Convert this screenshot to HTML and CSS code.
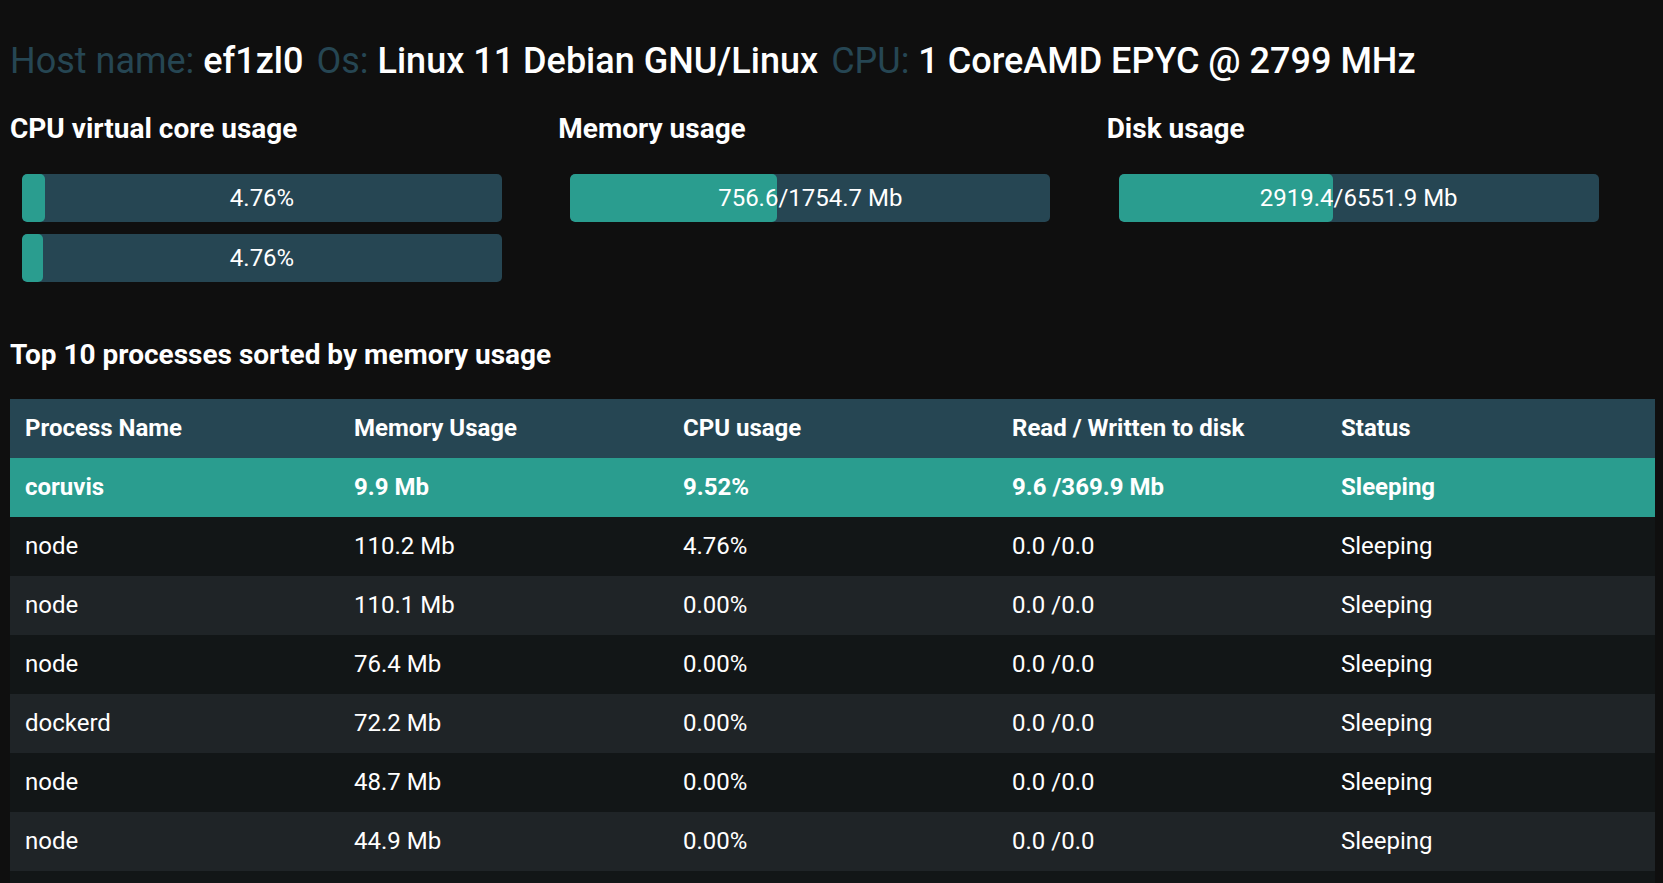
FILE: index.html
```html
<!DOCTYPE html>
<html lang="en">
<head>
<meta charset="utf-8">
<title>System monitor</title>
<link rel="stylesheet" href="styles.css">
</head>
<body>
<main class="page">
  <header class="sysinfo">
    <span class="item"><span class="label">Host name:</span> <span class="value">ef1zl0</span></span>
    <span class="item"><span class="label">Os:</span> <span class="value">Linux 11 Debian GNU/Linux</span></span>
    <span class="item"><span class="label">CPU:</span> <span class="value">1 CoreAMD EPYC @ 2799 MHz</span></span>
  </header>

  <section class="usage">
    <div class="usage-col">
      <h3 class="usage-title">CPU virtual core usage</h3>
      <div class="bars">
        <div class="bar"><div class="fill" style="width:4.76%"></div><span class="bar-text">4.76%</span></div>
        <div class="bar"><div class="fill" style="width:4.4%"></div><span class="bar-text">4.76%</span></div>
      </div>
    </div>
    <div class="usage-col">
      <h3 class="usage-title">Memory usage</h3>
      <div class="bars">
        <div class="bar"><div class="fill" style="width:43.1%"></div><span class="bar-text">756.6/1754.7 Mb</span></div>
      </div>
    </div>
    <div class="usage-col">
      <h3 class="usage-title">Disk usage</h3>
      <div class="bars">
        <div class="bar"><div class="fill" style="width:44.56%"></div><span class="bar-text">2919.4/6551.9 Mb</span></div>
      </div>
    </div>
  </section>

  <h2 class="procs-title">Top 10 processes sorted by memory usage</h2>
  <table class="procs">
    <thead>
      <tr><th>Process Name</th><th>Memory Usage</th><th>CPU usage</th><th>Read / Written to disk</th><th>Status</th></tr>
    </thead>
    <tbody>
      <tr class="self"><td>coruvis</td><td>9.9 Mb</td><td>9.52%</td><td>9.6 /369.9 Mb</td><td>Sleeping</td></tr>
      <tr><td>node</td><td>110.2 Mb</td><td>4.76%</td><td>0.0 /0.0</td><td>Sleeping</td></tr>
      <tr><td>node</td><td>110.1 Mb</td><td>0.00%</td><td>0.0 /0.0</td><td>Sleeping</td></tr>
      <tr><td>node</td><td>76.4 Mb</td><td>0.00%</td><td>0.0 /0.0</td><td>Sleeping</td></tr>
      <tr><td>dockerd</td><td>72.2 Mb</td><td>0.00%</td><td>0.0 /0.0</td><td>Sleeping</td></tr>
      <tr><td>node</td><td>48.7 Mb</td><td>0.00%</td><td>0.0 /0.0</td><td>Sleeping</td></tr>
      <tr><td>node</td><td>44.9 Mb</td><td>0.00%</td><td>0.0 /0.0</td><td>Sleeping</td></tr>
      <tr><td>containerd</td><td>40.1 Mb</td><td>0.00%</td><td>0.0 /0.0</td><td>Sleeping</td></tr>
      <tr><td>node</td><td>38.6 Mb</td><td>0.00%</td><td>0.0 /0.0</td><td>Sleeping</td></tr>
      <tr><td>systemd</td><td>10.2 Mb</td><td>0.00%</td><td>0.0 /0.0</td><td>Sleeping</td></tr>
    </tbody>
  </table>
</main>
</body>
</html>
```
FILE: styles.css
```css
html, body {
  margin: 0;
  padding: 0;
  background: #0f0f0f;
}

body {
  color: #ffffff;
  font-family: Roboto, "Liberation Sans", Arial, sans-serif;
}

.page {
  padding: 40px 8px 0 10px;
}

.sysinfo {
  display: flex;
  gap: 13px;
  font-size: 36px;
  line-height: 42px;
  white-space: nowrap;
}

.sysinfo .label {
  color: #264653;
  font-weight: 400;
}

.sysinfo .value {
  color: #ffffff;
  font-weight: 500;
}

.usage {
  display: grid;
  grid-template-columns: repeat(3, 1fr);
  margin-top: 30px;
}

.usage-title {
  margin: 0;
  font-size: 28px;
  line-height: 33px;
  font-weight: 700;
}

.bars {
  display: flex;
  flex-direction: column;
  gap: 12px;
  margin-top: 29px;
  padding-left: 12px;
}

.bar {
  position: relative;
  width: 480px;
  height: 48px;
  background: #264653;
  border-radius: 5px;
  display: flex;
  align-items: center;
  justify-content: center;
  overflow: hidden;
}

.fill {
  position: absolute;
  left: 0;
  top: 0;
  bottom: 0;
  background: #2a9d8f;
  border-radius: 5px;
}

.bar-text {
  position: relative;
  font-size: 24px;
  line-height: 28px;
  color: #ffffff;
}

.procs-title {
  margin: 56px 0 0 0;
  font-size: 28px;
  line-height: 33px;
  font-weight: 700;
}

.procs {
  margin-top: 28px;
  width: 100%;
  border-collapse: collapse;
  table-layout: fixed;
  font-size: 24px;
}

.procs th,
.procs td {
  text-align: left;
  padding: 15px 15px;
  line-height: 29px;
  white-space: nowrap;
}

.procs th {
  background: #264653;
  font-weight: 700;
}

.procs tbody tr {
  background: #121617;
}

.procs tbody tr:nth-child(odd) {
  background: #1f2427;
}

.procs tbody tr.self {
  background: #2a9d8f;
  font-weight: 700;
}
```
